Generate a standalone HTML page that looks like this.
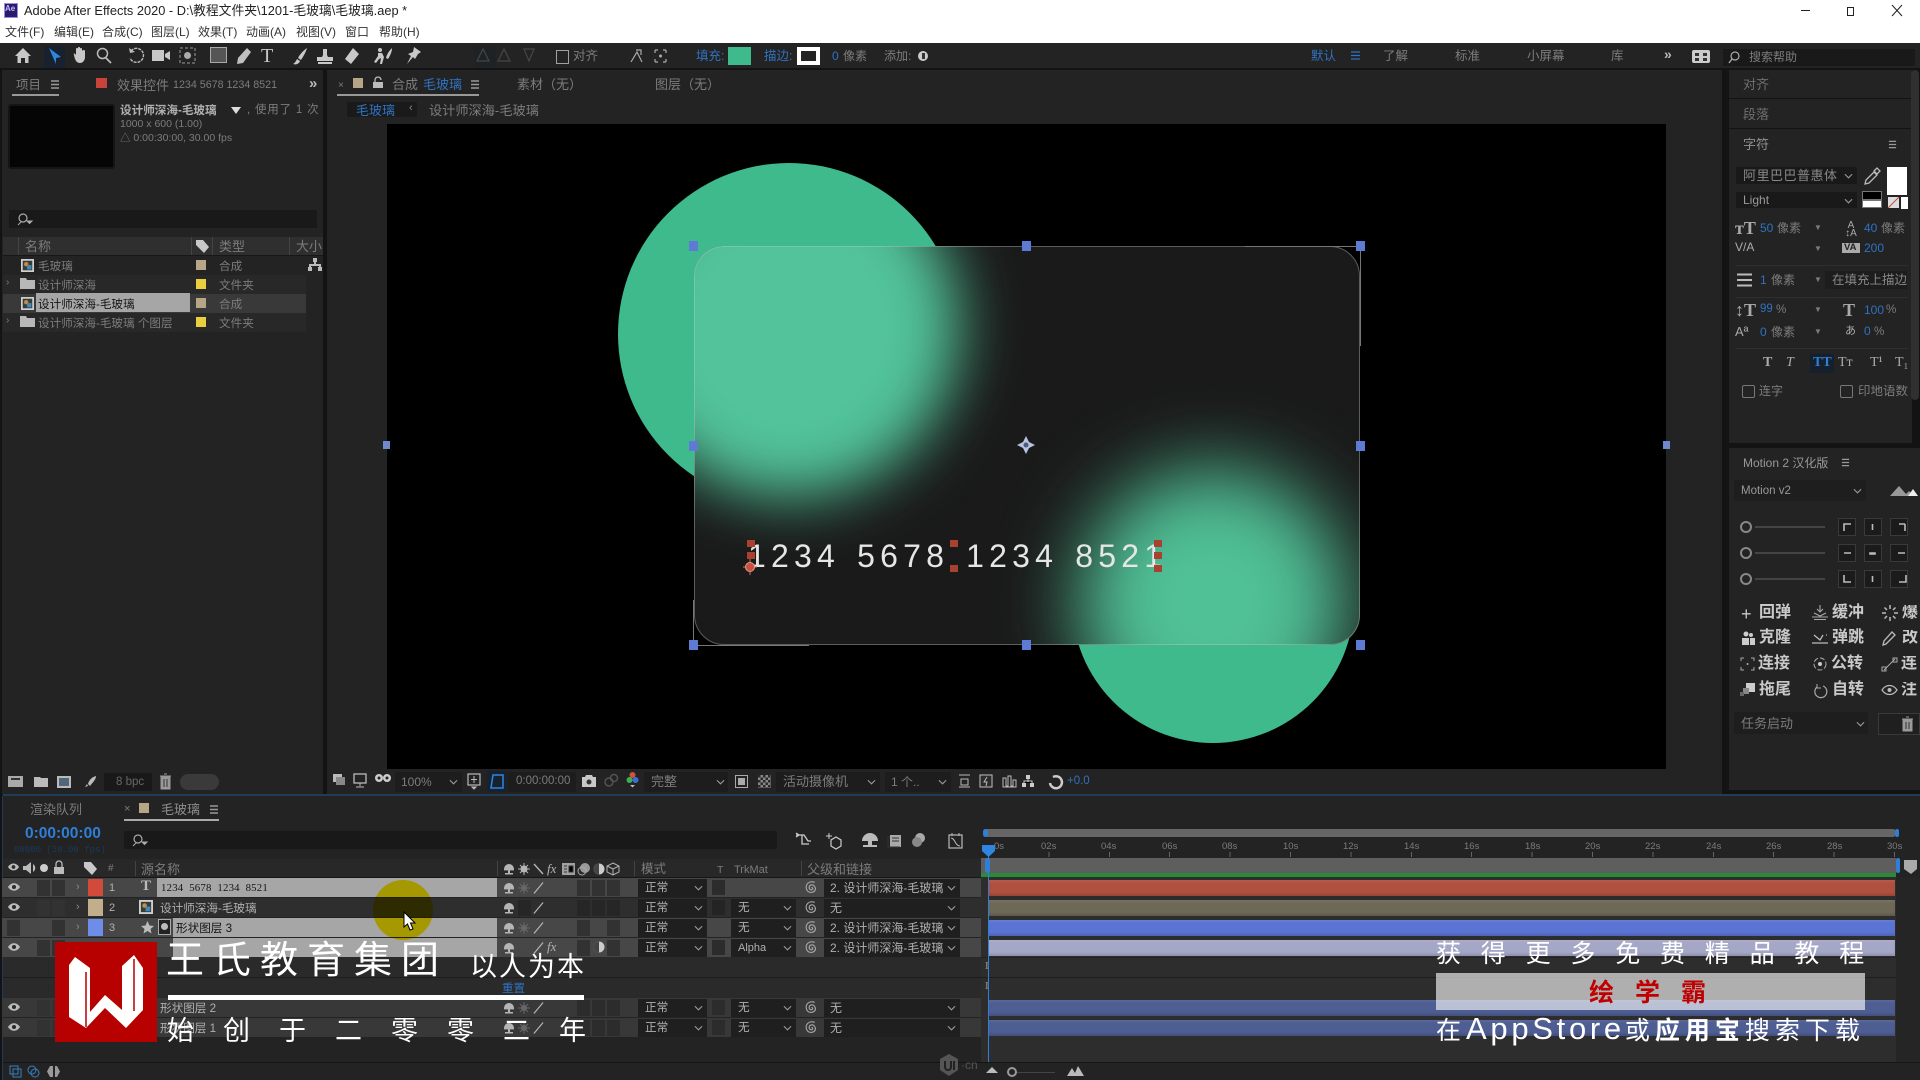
<!DOCTYPE html>
<html><head><meta charset="utf-8"><style>
html,body{margin:0;padding:0;width:1920px;height:1080px;overflow:hidden;background:#131313}
#p{position:absolute;left:0;top:0;width:1920px;height:1080px;overflow:hidden;font-family:"Liberation Sans","Noto Sans CJK SC",sans-serif;filter:blur(.35px);background:#131313}
div,span,svg{position:absolute}
span{white-space:nowrap;line-height:1}
.d{color:#7c7c7c;font-size:13px}
.s{color:#7c7c7c;font-size:11.6px}
.l{color:#b0b0b0;font-size:11.6px}
.b{color:#2f72c0;font-size:12px}
.p{background:#232323}
.x{background:#191919}
.h{width:9px;height:10px;background:#5d7bd5}
.q{width:8px;height:7px;background:#a8412f}
.w{color:#c9c9c9;font-size:16px;font-weight:bold}
.ln{height:1px;background:#181818}
svg{overflow:visible}
.r{left:2px;width:979px;height:19px}
.r>*{margin-left:-2px}
.sb{width:13px;height:16px;top:2px;background:#323232}
.mb{left:638px;top:1px;width:69px;height:18px;background:#1f1f1f}
.tb{left:712px;top:2px;width:13px;height:15px;background:#2c2c2c}
.kb{left:731px;top:1px;width:65px;height:18px;background:#1f1f1f}
.ab{left:824px;top:1px;width:136px;height:18px;background:#1f1f1f}
.bar{left:988px;width:907px;height:16px;box-shadow:inset 0 2px 2px rgba(255,255,255,.07),inset 0 -2px 2px rgba(0,0,0,.14)}
.g{width:18px;height:18px;background:#1b1b1b;border:1px solid #3a3a3a;box-sizing:border-box}
</style></head><body><div id="p">
<svg width="0" height="0" style="left:0;top:0"><defs>
<symbol id="c" viewBox="0 0 10 6"><path d="M1 1l4 4 4-4" fill="none" stroke="#999" stroke-width="1.2"/></symbol>
<symbol id="m" viewBox="0 0 10 9"><path d="M1 1h8M1 4.5h8M1 8h8" stroke="#999" stroke-width="1.4"/></symbol>
<symbol id="e" viewBox="0 0 12 8"><path d="M0 4c3-5 9-5 12 0-3 5-9 5-12 0z" fill="#bbb"/><circle cx="6" cy="4" r="2" fill="#2a2a2a"/></symbol>
<symbol id="n" viewBox="0 0 12 12"><path d="M1 6a5 5 0 0 1 10 0zM5 6h2v4H5zM2 10h8v1.5H2zM1 6h10v1.4H1z" fill="#b5b5b5"/></symbol>
<symbol id="sl" viewBox="0 0 12 12"><path d="M1 12L11 0" stroke="#b5b5b5" stroke-width="1.3"/></symbol>
<symbol id="sp" viewBox="0 0 14 14"><path d="M7 7.5c1-1 2 .5 1 1.5s-3.5.5-3.5-2S7 3.5 9 4.5s3 4 1.5 6-5.500 2.500-7.500.5S.5 5.500 2.500 3 8 .5 10.500 1.500" fill="none" stroke="#a8a8a8" stroke-width="1.2"/></symbol>
<symbol id="cp" viewBox="0 0 15 15"><rect width="15" height="15" fill="#cfcfcf"/><rect x="2" y="2" width="11" height="11" fill="#33403a"/><circle cx="6" cy="6" r="2.500" fill="#c84"/><rect x="7" y="7" width="5" height="5" fill="#48b"/></symbol>
<symbol id="f" viewBox="0 0 15 12"><path d="M0 1h6l1 2h8v9H0z" fill="#b8b8b8"/></symbol>
</defs></svg>

<!-- title -->
<div style="left:0;top:0;width:1920px;height:43px;background:#fff"></div>
<div style="left:4px;top:3px;width:14px;height:15px;background:#2a1a6a;border:1px solid #9a8ae0;box-sizing:border-box"></div>
<span style="left:5px;top:5px;color:#c9b8ff;font-size:8px;font-weight:bold">Ae</span>
<span style="left:24px;top:5px;color:#222;font-size:12.800px">Adobe After Effects 2020 - D:\教程文件夹\1201-毛玻璃\毛玻璃.aep *</span>
<span style="left:5px;top:26px;color:#333;font-size:12px">文件(F)</span>
<span style="left:54px;top:26px;color:#333;font-size:12px">编辑(E)</span>
<span style="left:102px;top:26px;color:#333;font-size:12px">合成(C)</span>
<span style="left:151px;top:26px;color:#333;font-size:12px">图层(L)</span>
<span style="left:198px;top:26px;color:#333;font-size:12px">效果(T)</span>
<span style="left:246px;top:26px;color:#333;font-size:12px">动画(A)</span>
<span style="left:296px;top:26px;color:#333;font-size:12px">视图(V)</span>
<span style="left:345px;top:26px;color:#333;font-size:12px">窗口</span>
<span style="left:379px;top:26px;color:#333;font-size:12px">帮助(H)</span>
<div style="left:1801px;top:10px;width:9px;height:1px;background:#222"></div>
<div style="left:1847px;top:7px;width:7px;height:9px;border:1px solid #222;box-sizing:border-box"></div>
<svg style="left:1892px;top:5px" width="10" height="11"><path d="M0 0l10 11M10 0L0 11" stroke="#222"/></svg>

<!-- toolbar -->
<div class="p" style="left:0;top:43px;width:1920px;height:25px"></div>
<svg style="left:14px;top:47px" width="18" height="17"><path d="M9 1L1 9h2.500v7H7v-5h4v5h3.500V9H17z" fill="#c8c8c8"/></svg>
<div style="left:44px;top:46px;width:21px;height:22px;background:#17222e"></div>
<svg style="left:49px;top:48px" width="12" height="16"><path d="M0 0l12 9-5 1 0 6z" fill="#2f86e0"/></svg>
<svg style="left:72px;top:47px" width="15" height="17"><path d="M2 8c-1-2 1-2 2 0V2c0-1.500 2-1.500 2 0V1c0-1.500 2-1.500 2 0v1c0-1.500 2-1.500 2 0v2c1-1.500 3-1 3 0v6c0 3-2 6-5 6S3 14 2 8z" fill="#c8c8c8"/></svg>
<svg style="left:96px;top:47px" width="16" height="17"><circle cx="6.500" cy="6.500" r="5" fill="none" stroke="#bbb" stroke-width="1.500"/><path d="M10 11l5 5" stroke="#bbb" stroke-width="1.800"/></svg>
<svg style="left:128px;top:47px" width="17" height="17"><path d="M3 4a7 7 0 1 1-1 7" fill="none" stroke="#bbb" stroke-width="1.400" stroke-dasharray="3 1"/><path d="M1 1l1 5 5-1z" fill="#bbb"/></svg>
<svg style="left:152px;top:49px" width="19" height="13"><rect y="1" width="12" height="11" fill="#c8c8c8"/><path d="M13 5l5-3v9l-5-3z" fill="#c8c8c8"/></svg>
<svg style="left:179px;top:47px" width="17" height="17"><rect x="1" y="1" width="15" height="15" fill="none" stroke="#999" stroke-dasharray="3 2"/><circle cx="8.500" cy="8.500" r="3.500" fill="#aaa"/></svg>
<div style="left:210px;top:47px;width:17px;height:16px;border:1.500px solid #aaa;background:#555;box-sizing:border-box"></div>
<svg style="left:235px;top:47px" width="17" height="18"><path d="M12 1l4 4-8 11-6 1 1-6z" fill="#c0c0c0"/></svg>
<span style="left:261px;top:46px;color:#c8c8c8;font-size:20px;font-family:'Liberation Serif',serif">T</span>
<svg style="left:292px;top:47px" width="16" height="18"><path d="M15 1c-3 2-7 6-9 10l3 2c2-3 5-8 6-12zM5 12l3 2c-1 3-4 4-7 3 2-1 3-3 4-5z" fill="#c8c8c8"/></svg>
<svg style="left:316px;top:47px" width="18" height="18"><path d="M7 2h4v6l1 2h5v4H1v-4h5l1-2zM2 15h14v2H2z" fill="#c8c8c8"/></svg>
<svg style="left:342px;top:47px" width="18" height="18"><path d="M11 1l6 6-8 10-6-5z" fill="#c8c8c8"/></svg>
<svg style="left:373px;top:47px" width="21" height="18"><circle cx="7" cy="3" r="2" fill="#c8c8c8"/><path d="M5 6h4l2 4-2 7H7l1-6-2 1-3 4-2-1 4-6zM19 1c-3 3-5 6-6 10l2 1c2-3 4-7 4-11z" fill="#c8c8c8"/></svg>
<svg style="left:404px;top:46px" width="19" height="19"><path d="M10 1l7 5-3 2-3 5-2-2-6 7 4-8-3-2 5-2z" fill="#c8c8c8"/></svg>
<div style="left:474px;top:46px;width:22px;height:21px;background:#1f2225"></div>
<svg style="left:474px;top:48px" width="65" height="14" opacity=".3"><path d="M9 1L3 13h12zM30 1l-6 12h12zM50 1h10l-5 12z" fill="none" stroke="#999" stroke-width="1.200"/></svg>
<div style="left:556px;top:50px;width:13px;height:14px;border:1.500px solid #a0a0a0;box-sizing:border-box"></div>
<span class="d" style="left:573px;top:50px;font-size:12.500px">对齐</span>
<svg style="left:630px;top:49px" width="40" height="14"><path d="M1 13L7 3l5 10M6 1h5v5" fill="none" stroke="#aaa" stroke-width="1.200"/><path d="M25 1h3M33 1h3M25 13h3M33 13h3M25 1v3M36 1v3M25 10v3M36 10v3" stroke="#aaa" stroke-width="1.200"/><circle cx="30.500" cy="7" r="1.500" fill="#aaa"/></svg>
<span class="b" style="left:696px;top:50px;font-size:12.500px">填充:</span>
<div style="left:728px;top:47px;width:23px;height:18px;background:#3fba8d"></div>
<span class="b" style="left:764px;top:50px;font-size:12.500px">描边:</span>
<div style="left:797px;top:47px;width:23px;height:18px;background:#fff"></div>
<div style="left:801px;top:51px;width:15px;height:10px;background:#232323"></div>
<span class="b" style="left:832px;top:50px">0</span>
<span class="d" style="left:843px;top:50px;font-size:12px">像素</span>
<span class="d" style="left:884px;top:50px;font-size:12px">添加:</span>
<div style="left:918px;top:51px;width:10px;height:10px;border-radius:50%;background:#ccc"></div>
<div style="left:922px;top:53px;width:3px;height:6px;background:#333"></div>
<span class="b" style="left:1311px;top:50px;font-size:12.500px">默认</span>
<svg style="left:1351px;top:51px" width="9" height="9"><path d="M0 1h9M0 4.500h9M0 8h9" stroke="#2f72c0" stroke-width="1.300"/></svg>
<span class="d" style="left:1383px;top:50px;font-size:12.500px">了解</span>
<span class="d" style="left:1455px;top:50px;font-size:12.500px">标准</span>
<span class="d" style="left:1527px;top:50px;font-size:12.500px">小屏幕</span>
<span class="d" style="left:1611px;top:50px;font-size:12.500px">库</span>
<span style="left:1664px;top:47px;color:#bbb;font-size:14px;font-weight:bold">»</span>
<div style="left:1692px;top:50px;width:18px;height:13px;background:#ccc;border-radius:2px"></div>
<div style="left:1695px;top:53px;width:4px;height:3px;background:#333"></div>
<div style="left:1703px;top:53px;width:4px;height:3px;background:#333"></div>
<div style="left:1695px;top:58px;width:4px;height:3px;background:#333"></div>
<div style="left:1703px;top:58px;width:4px;height:3px;background:#333"></div>
<div class="x" style="left:1723px;top:49px;width:192px;height:17px"></div>
<svg style="left:1728px;top:51px" width="12" height="13"><circle cx="7" cy="5" r="4" fill="none" stroke="#aaa" stroke-width="1.200"/><path d="M4 8L1 12" stroke="#aaa" stroke-width="1.400"/></svg>
<span class="d" style="left:1749px;top:51px;font-size:12px">搜索帮助</span>

<!-- left panel -->
<div class="p" style="left:2px;top:70px;width:321px;height:725px"></div>
<span class="d" style="left:16px;top:79px;font-size:12.500px">项目</span>
<svg style="left:50px;top:80px" width="10" height="9"><use href="#m"/></svg>
<div style="left:12px;top:94px;width:47px;height:2px;background:#999"></div>
<div style="left:96px;top:78px;width:11px;height:10px;background:#c8443a"></div>
<span class="d" style="left:117px;top:79px;font-size:13px">效果控件</span>
<span class="d" style="left:173px;top:80px;font-size:10.700px">1234 5678 1234 8521</span>
<span style="left:309px;top:76px;color:#bbb;font-size:15px;font-weight:bold">»</span>
<div style="left:8px;top:104px;width:107px;height:65px;background:#050505;border:2px solid #151515;box-sizing:border-box;border-radius:3px"></div>
<span class="l" style="left:120px;top:105px;font-weight:bold;font-size:11.600px">设计师深海-毛玻璃</span>
<svg style="left:231px;top:107px" width="10" height="7"><path d="M0 0h10L5 7z" fill="#ddd"/></svg>
<span class="s" style="left:247px;top:105px;font-size:11.500px;letter-spacing:.8px">, 使用了 1 次</span>
<span class="s" style="left:120px;top:119px;font-size:10.500px">1000 x 600 (1.00)</span>
<span class="s" style="left:120px;top:133px;font-size:10.500px">△ 0:00:30:00, 30.00 fps</span>
<div class="x" style="left:9px;top:210px;width:308px;height:18px"></div>
<svg style="left:16px;top:213px" width="17" height="13"><circle cx="7" cy="5" r="4" fill="none" stroke="#aaa" stroke-width="1.200"/><path d="M5 9l-3 3M11 8h5l-2.500 2.500z" stroke="#aaa" fill="#aaa"/></svg>
<div style="left:3px;top:237px;width:320px;height:18px;background:#2f2f2f;border-bottom:1px solid #171717"></div>
<span class="d" style="left:25px;top:240px">名称</span>
<svg style="left:196px;top:240px" width="13" height="13"><path d="M0 0h7l6 7-5 6-8-8z" fill="#c8c8c8"/></svg>
<span class="d" style="left:219px;top:240px">类型</span>
<span class="d" style="left:296px;top:240px">大小</span>
<div style="left:18px;top:237px;width:1px;height:18px;background:#444"></div>
<div style="left:191px;top:237px;width:1px;height:18px;background:#444"></div>
<div style="left:212px;top:237px;width:1px;height:18px;background:#444"></div>
<div style="left:289px;top:237px;width:1px;height:18px;background:#444"></div>
<div style="left:3px;top:275px;width:303px;height:19px;background:#282828"></div>
<div style="left:3px;top:294px;width:303px;height:19px;background:#393939"></div>
<div style="left:3px;top:313px;width:303px;height:19px;background:#282828"></div>
<svg style="left:20px;top:259px" width="15" height="13"><use href="#cp"/></svg>
<svg style="left:20px;top:277px" width="15" height="12"><use href="#f"/></svg>
<svg style="left:20px;top:297px" width="15" height="13"><use href="#cp"/></svg>
<svg style="left:20px;top:315px" width="15" height="12"><use href="#f"/></svg>
<div style="left:36px;top:293px;width:154px;height:19px;background:#a6a6a6"></div>
<span class="s" style="left:38px;top:261px">毛玻璃</span>
<span class="s" style="left:38px;top:280px">设计师深海</span>
<span style="left:38px;top:299px;font-size:11.600px;color:#151515">设计师深海-毛玻璃</span>
<span class="s" style="left:38px;top:318px">设计师深海-毛玻璃 个图层</span>
<span class="s" style="left:6px;top:278px;font-size:10px">›</span>
<span class="s" style="left:6px;top:316px;font-size:10px">›</span>
<div style="left:196px;top:260px;width:10px;height:10px;background:#b7a588"></div>
<div style="left:196px;top:279px;width:10px;height:10px;background:#e9cf3f"></div>
<div style="left:196px;top:298px;width:10px;height:10px;background:#b7a588"></div>
<div style="left:196px;top:317px;width:10px;height:10px;background:#e9cf3f"></div>
<span class="s" style="left:219px;top:261px">合成</span>
<span class="s" style="left:219px;top:280px">文件夹</span>
<span class="s" style="left:219px;top:299px">合成</span>
<span class="s" style="left:219px;top:318px">文件夹</span>
<svg style="left:308px;top:258px" width="14" height="13"><path d="M5 0h4v4H8v2h5v3h1v4h-4V9h1V8H3v1h1v4H0V9h1V6h5V4H5z" fill="#bbb"/></svg>
<svg style="left:8px;top:775px" width="90" height="14"><rect y="1" width="15" height="11" fill="#aaa"/><rect x="3" y="3" width="9" height="2" fill="#333"/><path d="M26 2h6l1 1h7v9H26z" fill="#bbb"/><rect x="49" y="1" width="14" height="12" fill="#bbb"/><rect x="51" y="3" width="10" height="8" fill="#567"/><path d="M88 1c-4 1-7 4-8 8l2 2c2-3 6-6 6-10zM79 9l-2 3 3-1z" fill="#bbb"/></svg>
<div class="x" style="left:104px;top:773px;width:48px;height:18px"></div>
<span class="s" style="left:116px;top:777px;font-size:11.500px;color:#666">8 bpc</span>
<svg style="left:160px;top:774px" width="11" height="15"><path d="M1 3h9v12H1zM0 2h11M4 0h3" fill="#999" stroke="#999"/><path d="M4 5v8M7 5v8" stroke="#333"/></svg>
<div style="left:180px;top:774px;width:39px;height:16px;border-radius:8px;background:#3a3a3a"></div>

<!-- viewer panel -->
<div class="p" style="left:327px;top:70px;width:1395px;height:725px"></div>
<span class="s" style="left:338px;top:81px;font-size:10px">×</span>
<div style="left:353px;top:78px;width:10px;height:10px;background:#b7a588"></div>
<svg style="left:373px;top:77px" width="10" height="11"><path d="M2 5V3a3 3 0 0 1 6 0" fill="none" stroke="#bbb" stroke-width="1.300"/><rect y="5" width="10" height="6" fill="#bbb"/></svg>
<span class="d" style="left:392px;top:78px">合成</span>
<span class="d" style="left:423px;top:78px;color:#2f72c0">毛玻璃</span>
<svg style="left:470px;top:80px" width="10" height="9"><use href="#m"/></svg>
<div style="left:337px;top:94px;width:142px;height:2px;background:#999"></div>
<span class="d" style="left:517px;top:78px">素材（无）</span>
<span class="d" style="left:655px;top:78px">图层（无）</span>
<div style="left:347px;top:102px;width:70px;height:15px;background:#1a1a1a;border-radius:2px"></div>
<span class="d" style="left:356px;top:104px;color:#2f72c0">毛玻璃</span>
<span class="d" style="left:409px;top:103px;font-size:11px;color:#888">‹</span>
<span class="d" style="left:429px;top:104px;font-size:13.200px">设计师深海-毛玻璃</span>

<!-- comp -->
<div style="left:387px;top:124px;width:1279px;height:645px;background:#000"></div>
<div style="left:618px;top:163px;width:342px;height:342px;border-radius:50%;background:#3fba8d"></div>
<div style="left:1072px;top:461px;width:282px;height:282px;border-radius:50%;background:#3fba8d"></div>
<div style="left:694px;top:246px;width:666px;height:399px;border-radius:30px;overflow:hidden;background:#1a1a1a">
<div style="left:-76px;top:-90px;width:342px;height:342px;border-radius:50%;background:#52c39a;filter:blur(30px)"></div>
<div style="left:384px;top:222px;width:270px;height:270px;border-radius:50%;background:#50c096;filter:blur(38px)"></div>
</div>
<div style="left:694px;top:246px;width:666px;height:399px;border-radius:30px;border:1.500px solid rgba(200,200,200,.38);box-sizing:border-box"></div>
<div style="left:1245px;top:246px;width:115px;height:1px;background:#777"></div>
<div style="left:1360px;top:246px;width:1px;height:100px;background:#777"></div>
<div style="left:694px;top:645px;width:115px;height:1px;background:#777"></div>
<div style="left:693px;top:600px;width:1px;height:45px;background:#777"></div>
<div class="h" style="left:689px;top:241px"></div>
<div class="h" style="left:1022px;top:241px"></div>
<div class="h" style="left:1356px;top:241px"></div>
<div class="h" style="left:689px;top:441px"></div>
<div class="h" style="left:1356px;top:441px"></div>
<div class="h" style="left:689px;top:640px"></div>
<div class="h" style="left:1022px;top:640px"></div>
<div class="h" style="left:1356px;top:640px"></div>
<div class="h" style="left:383px;top:441px;background:#6f88cf;width:7px;height:8px"></div>
<div class="h" style="left:1663px;top:441px;background:#6f88cf;width:7px;height:8px"></div>
<svg style="left:1017px;top:436px" width="18" height="18"><path d="M9 0l3 6 6 3-6 3-3 6-3-6-6-3 6-3z" fill="#b9c3e0"/><circle cx="9" cy="9" r="2.500" fill="#4a5a80"/></svg>
<span style="left:748px;top:540px;color:#e6e6e6;font-size:32px;letter-spacing:5.200px;word-spacing:3px">1234 5678 1234 8521</span>
<div class="q" style="left:747px;top:540px"></div>
<div class="q" style="left:747px;top:552px"></div>
<div class="q" style="left:950px;top:540px"></div>
<div class="q" style="left:950px;top:565px"></div>
<div class="q" style="left:1154px;top:540px"></div>
<div class="q" style="left:1154px;top:552px"></div>
<div class="q" style="left:1154px;top:565px"></div>
<svg style="left:743px;top:559px" width="14" height="16"><path d="M7 0v16M0 8h14" stroke="#d86a5a"/><circle cx="7" cy="8" r="4.500" fill="#c9503f" stroke="#e89a8a"/></svg>

<!-- viewer bar -->
<div class="p" style="left:327px;top:769px;width:1395px;height:25px"></div>
<svg style="left:333px;top:773px" width="60" height="16"><rect width="9" height="8" y="1" fill="#bbb"/><rect x="3" y="4" width="9" height="8" fill="#888"/><rect x="21" y="1" width="12" height="9" fill="none" stroke="#bbb" stroke-width="1.300"/><path d="M27 10v3M23 14h8" stroke="#bbb"/><circle cx="46" cy="5" r="4" fill="#ccc"/><circle cx="54" cy="5" r="4" fill="#ccc"/><circle cx="46" cy="5" r="1.500" fill="#222"/><circle cx="54" cy="5" r="1.500" fill="#222"/></svg>
<div class="x" style="left:395px;top:772px;width:67px;height:20px;background:#1d1d1d"></div>
<span class="s" style="left:401px;top:776px;font-size:12px">100%</span>
<svg style="left:449px;top:779px" width="9" height="6"><use href="#c"/></svg>
<svg style="left:467px;top:773px" width="14" height="16"><rect x="1" y="1" width="12" height="11" fill="none" stroke="#bbb" stroke-width="1.200"/><path d="M7 3v7M4 6.500h6M5 14h4l-2 2z" stroke="#bbb" fill="#bbb"/></svg>
<div style="left:487px;top:771px;width:20px;height:21px;background:#17222e"></div>
<svg style="left:490px;top:774px" width="14" height="15"><path d="M3 1h10v13H1z" fill="none" stroke="#2f86e0" stroke-width="1.500"/></svg>
<div class="x" style="left:508px;top:772px;width:68px;height:20px;background:#1d1d1d"></div>
<span class="s" style="left:516px;top:776px;font-size:11.500px">0:00:00:00</span>
<svg style="left:582px;top:774px" width="14" height="13"><path d="M0 3h3l1-2h6l1 2h3v10H0z" fill="#c8c8c8"/><circle cx="7" cy="8" r="2.500" fill="#333"/></svg>
<svg style="left:604px;top:773px" width="14" height="14" opacity=".35"><circle cx="5" cy="9" r="4" fill="none" stroke="#aaa" stroke-width="1.500"/><circle cx="10" cy="5" r="3.500" fill="none" stroke="#aaa" stroke-width="1.500"/></svg>
<svg style="left:626px;top:771px" width="13" height="17"><circle cx="6.500" cy="4" r="3" fill="#d5503a"/><circle cx="3.500" cy="9" r="3" fill="#39b14f"/><circle cx="9.500" cy="9" r="3" fill="#3a6fd8"/><path d="M4 14h5l-2.500 2.500z" fill="#bbb"/></svg>
<div class="x" style="left:644px;top:772px;width:84px;height:20px;background:#1d1d1d"></div>
<span class="d" style="left:651px;top:775px">完整</span>
<svg style="left:716px;top:779px" width="9" height="6"><use href="#c"/></svg>
<div style="left:735px;top:775px;width:13px;height:13px;border:1.500px solid #aaa;box-sizing:border-box"></div><div style="left:738px;top:778px;width:7px;height:7px;background:#aaa"></div>
<div style="left:758px;top:775px;width:13px;height:13px;background:repeating-conic-gradient(#888 0 25%,#2a2a2a 0 50%) 0 0/5px 5px"></div>
<div class="x" style="left:776px;top:772px;width:104px;height:20px;background:#1d1d1d"></div>
<span class="d" style="left:783px;top:775px">活动摄像机</span>
<svg style="left:867px;top:779px" width="9" height="6"><use href="#c"/></svg>
<div class="x" style="left:885px;top:772px;width:66px;height:20px;background:#1d1d1d"></div>
<span class="s" style="left:891px;top:776px;font-size:12px">1 个..</span>
<svg style="left:938px;top:779px" width="9" height="6"><use href="#c"/></svg>
<svg style="left:958px;top:774px" width="105" height="15"><path d="M1 1h11M1 13h11" stroke="#bbb"/><rect x="3" y="5" width="7" height="6" fill="none" stroke="#bbb"/><rect x="21" y="0" width="14" height="14" fill="#2c2c2c"/><rect x="22" y="1" width="12" height="12" fill="none" stroke="#bbb"/><path d="M29 3l-3 5h3l-1 4" stroke="#bbb" fill="none"/><path d="M45 12V4h3v8h2V2h3v10h2V6h3v7H45z" fill="none" stroke="#bbb"/><rect x="68" y="1" width="4" height="4" fill="#ccc"/><rect x="64" y="9" width="4" height="4" fill="#ccc"/><rect x="72" y="9" width="4" height="4" fill="#ccc"/><path d="M70 5v3M66 9V7h8v2" stroke="#ccc"/><path d="M95 3a6 6 0 1 1-3 6" fill="none" stroke="#ccc" stroke-width="2.500"/></svg>
<span class="b" style="left:1067px;top:776px;font-size:11.500px">+0.0</span>
<div style="left:3px;top:794px;width:1917px;height:1.500px;background:#1f3d58"></div>

<!-- right panels -->
<div class="p" style="left:1729px;top:70px;width:183px;height:28px"></div>
<div class="p" style="left:1729px;top:99px;width:183px;height:29px"></div>
<div class="p" style="left:1729px;top:129px;width:183px;height:314px"></div>
<div style="left:1911px;top:70px;width:8px;height:330px;border-radius:4px;background:#303030"></div>
<div style="left:1727px;top:70px;width:1px;height:720px;background:#161616"></div>
<span class="d" style="left:1743px;top:78px;color:#6f6f6f">对齐</span>
<span class="d" style="left:1743px;top:108px;color:#6f6f6f">段落</span>
<span class="d" style="left:1743px;top:138px;color:#909090">字符</span>
<svg style="left:1888px;top:140px" width="9" height="9"><use href="#m"/></svg>
<div class="x" style="left:1736px;top:167px;width:121px;height:17px"></div>
<span class="d" style="left:1743px;top:169px;letter-spacing:.5px;color:#888">阿里巴巴普惠体</span>
<svg style="left:1844px;top:173px" width="9" height="6"><use href="#c"/></svg>
<svg style="left:1863px;top:168px" width="18" height="18"><path d="M2 16l1-4 8-8 3 3-8 8zM11 3l3-3 3 3-3 3z" fill="none" stroke="#bbb" stroke-width="1.300"/></svg>
<div style="left:1887px;top:167px;width:20px;height:28px;background:#fff"></div>
<div class="x" style="left:1736px;top:192px;width:121px;height:16px"></div>
<span class="d" style="left:1743px;top:194px;font-size:12px;color:#999">Light</span>
<svg style="left:1844px;top:198px" width="9" height="6"><use href="#c"/></svg>
<div style="left:1862px;top:191px;width:20px;height:9px;background:#000;border:1px solid #777;box-sizing:border-box"></div>
<div style="left:1862px;top:200px;width:20px;height:8px;background:#fff;border:1px solid #777;box-sizing:border-box"></div>
<svg style="left:1888px;top:197px" width="11" height="11"><rect width="11" height="11" fill="#ddd"/><path d="M0 11L11 0" stroke="#c05040"/></svg>
<div style="left:1901px;top:197px;width:7px;height:12px;background:#fff"></div>
<div style="left:1736px;top:265px;width:172px;height:1px;background:#2f2f2f"></div>
<div style="left:1736px;top:297px;width:172px;height:1px;background:#2f2f2f"></div>
<div style="left:1736px;top:348px;width:172px;height:1px;background:#2f2f2f"></div>
<span style="left:1735px;top:219px;color:#aaa;font-size:18px;font-weight:bold;font-family:'Liberation Serif',serif">тT</span>
<span class="b" style="left:1760px;top:222px">50</span><span class="d" style="left:1777px;top:222px;font-size:12px">像素</span>
<span class="s" style="left:1814px;top:224px;font-size:8px">▼</span>
<span style="left:1841px;top:222px;color:#aaa;font-size:10px;line-height:8px;white-space:normal;width:20px;text-align:center">A<br>↕A</span>
<span class="b" style="left:1864px;top:222px">40</span><span class="d" style="left:1881px;top:222px;font-size:12px">像素</span>
<span class="d" style="left:1735px;top:241px;font-size:12px;color:#aaa">V/A</span>
<span class="s" style="left:1814px;top:245px;font-size:8px">▼</span>
<div style="left:1842px;top:243px;width:18px;height:10px;background:#aaa"></div>
<span style="left:1844px;top:243px;color:#222;font-size:9.500px;font-weight:bold">VA</span>
<span class="b" style="left:1864px;top:242px">200</span>
<svg style="left:1737px;top:273px" width="15" height="14"><path d="M0 1.500h15M0 7h15M0 12.500h15" stroke="#bbb" stroke-width="2"/></svg>
<span class="b" style="left:1760px;top:274px">1</span><span class="d" style="left:1771px;top:274px;font-size:12px">像素</span>
<span class="s" style="left:1814px;top:276px;font-size:8px">▼</span>
<div class="x" style="left:1825px;top:271px;width:82px;height:18px;overflow:hidden;background:#1d1d1d"><span class="d" style="left:7px;top:3px;font-size:12.500px;color:#888">在填充上描边</span></div>
<span style="left:1735px;top:301px;color:#aaa;font-size:18px;font-weight:bold;font-family:'Liberation Serif',serif">↕T</span>
<span class="b" style="left:1760px;top:304px;font-size:11.500px">99</span><span class="s" style="left:1776px;top:304px">%</span>
<span class="s" style="left:1814px;top:306px;font-size:8px">▼</span>
<span style="left:1843px;top:301px;color:#aaa;font-size:18px;font-weight:bold;font-family:'Liberation Serif',serif">T</span>
<span class="b" style="left:1864px;top:304px">100</span><span class="s" style="left:1886px;top:304px">%</span>
<span style="left:1735px;top:325px;color:#aaa;font-size:13px;font-family:'Liberation Sans'">Aª</span>
<span class="b" style="left:1760px;top:326px">0</span><span class="d" style="left:1771px;top:326px;font-size:12px">像素</span>
<span class="s" style="left:1814px;top:328px;font-size:8px">▼</span>
<span class="s" style="left:1845px;top:326px;font-size:11px;color:#aaa">あ</span>
<span class="b" style="left:1864px;top:325px">0</span><span class="s" style="left:1874px;top:326px">%</span>
<span style="left:1763px;top:356px;color:#aaa;font-size:14px;font-weight:bold;font-family:'Liberation Serif',serif">T</span>
<span style="left:1786px;top:356px;color:#aaa;font-size:14px;font-style:italic;font-family:'Liberation Serif',serif">T</span>
<div style="left:1810px;top:354px;width:24px;height:19px;background:#15202c"></div>
<span style="left:1813px;top:356px;color:#2f7fd8;font-size:14px;font-weight:bold;font-family:'Liberation Serif',serif">TT</span>
<span style="left:1838px;top:356px;color:#aaa;font-size:14px;font-family:'Liberation Serif',serif">Tт</span>
<span style="left:1870px;top:356px;color:#aaa;font-size:14px;font-family:'Liberation Serif',serif">T¹</span>
<span style="left:1895px;top:356px;color:#aaa;font-size:14px;font-family:'Liberation Serif',serif">T₁</span>
<div style="left:1742px;top:385px;width:13px;height:13px;border:1.500px solid #777;border-radius:2px;box-sizing:border-box"></div>
<span class="s" style="left:1759px;top:385px;font-size:12px">连字</span>
<div style="left:1840px;top:385px;width:13px;height:13px;border:1.500px solid #777;border-radius:2px;box-sizing:border-box"></div>
<div style="left:1858px;top:385px;width:50px;height:14px;overflow:hidden"><span class="s" style="left:0;top:0;font-size:12.500px">印地语数</span></div>

<div class="p" style="left:1729px;top:448px;width:191px;height:342px"></div>
<span class="l" style="left:1743px;top:457px;font-size:12px;color:#999">Motion 2 汉化版</span>
<svg style="left:1841px;top:458px" width="9" height="9"><use href="#m"/></svg>
<div class="x" style="left:1734px;top:480px;width:132px;height:21px;background:#1e1e1e"></div>
<span class="l" style="left:1741px;top:486px;font-size:11.500px;color:#999">Motion v2</span>
<svg style="left:1853px;top:488px" width="9" height="6"><use href="#c"/></svg>
<svg style="left:1890px;top:485px" width="28" height="12"><path d="M0 11L9 1l7 8 3-3 5 5z" fill="#999"/><path d="M18 11l5-7 5 7z" fill="#eee"/></svg>
<div style="left:1740px;top:521px;width:12px;height:12px;border:2px solid #888;border-radius:50%;box-sizing:border-box"></div>
<div style="left:1755px;top:526px;width:70px;height:2px;background:#444"></div>
<div style="left:1740px;top:547px;width:12px;height:12px;border:2px solid #888;border-radius:50%;box-sizing:border-box"></div>
<div style="left:1755px;top:552px;width:70px;height:2px;background:#444"></div>
<div style="left:1740px;top:573px;width:12px;height:12px;border:2px solid #888;border-radius:50%;box-sizing:border-box"></div>
<div style="left:1755px;top:578px;width:70px;height:2px;background:#444"></div>
<div class="g" style="left:1838px;top:518px"></div><div class="g" style="left:1864px;top:518px"></div><div class="g" style="left:1890px;top:518px"></div>
<div class="g" style="left:1838px;top:544px"></div><div class="g" style="left:1864px;top:544px"></div><div class="g" style="left:1890px;top:544px"></div>
<div class="g" style="left:1838px;top:570px"></div><div class="g" style="left:1864px;top:570px"></div><div class="g" style="left:1890px;top:570px"></div>
<svg style="left:1838px;top:518px" width="80" height="70"><path d="M6 13V6h7M34.500 6v6M67 6h-6M67 6v7M6 35h7M32 35h5v1h-5zM60 35h7M6 57v7h7M34.500 58v6M68 57v7h-7" fill="none" stroke="#bbb" stroke-width="1.600"/></svg>
<span class="w" style="left:1741px;top:605px;font-weight:normal;font-size:18px">+</span>
<span class="w" style="left:1759px;top:605px">回弹</span>
<svg style="left:1812px;top:605px" width="16" height="15"><path d="M8 0v6M5 4l3 3 3-3M2 8l6 3 6-3M0 12h16M2 14.500h12" fill="none" stroke="#aaa" stroke-width="1.100"/></svg>
<span class="w" style="left:1832px;top:605px">缓冲</span>
<svg style="left:1882px;top:605px" width="16" height="16"><path d="M8 0v4M8 12v4M0 8h4M12 8h4M2.500 2.500l2.500 2.500M11 11l2.500 2.500M2.500 13.500L5 11M11 5l2.500-2.500" stroke="#bbb" stroke-width="1.500"/></svg>
<div style="left:1902px;top:605px;width:17px;height:17px;overflow:hidden"><span class="w" style="left:0;top:0">爆</span></div>
<svg style="left:1741px;top:631px" width="14" height="14"><circle cx="5" cy="3" r="2.500" fill="#ccc"/><circle cx="10" cy="4" r="2" fill="#ccc"/><path d="M1 14V7h7v7zM9 14V7h5v7z" fill="#ccc"/></svg>
<span class="w" style="left:1759px;top:630px">克隆</span>
<svg style="left:1812px;top:631px" width="16" height="14"><path d="M0 12h16M2 4l6 5 3-5M14 4h1" fill="none" stroke="#bbb" stroke-width="1.300"/></svg>
<span class="w" style="left:1832px;top:630px">弹跳</span>
<svg style="left:1882px;top:631px" width="15" height="15"><path d="M1 14l1-4 8-9 3 3-9 9z" fill="none" stroke="#bbb" stroke-width="1.300"/></svg>
<div style="left:1902px;top:630px;width:17px;height:17px;overflow:hidden"><span class="w" style="left:0;top:0">改</span></div>
<svg style="left:1741px;top:658px" width="13" height="12"><path d="M0 3V0h3M10 0h3v3M0 9v3h3M13 9v3h-3" fill="none" stroke="#aaa"/><circle cx="6.500" cy="6" r="1" fill="#aaa"/></svg>
<span class="w" style="left:1758px;top:656px">连接</span>
<svg style="left:1813px;top:657px" width="14" height="14"><circle cx="7" cy="7" r="6" fill="none" stroke="#aaa" stroke-dasharray="5 2"/><circle cx="7" cy="7" r="2" fill="#ccc"/></svg>
<span class="w" style="left:1831px;top:656px">公转</span>
<svg style="left:1882px;top:657px" width="15" height="15"><path d="M2 13L13 2" stroke="#aaa"/><rect y="10" width="4" height="4" fill="none" stroke="#aaa"/><rect x="11" y="1" width="4" height="4" fill="none" stroke="#aaa"/></svg>
<div style="left:1901px;top:656px;width:18px;height:17px;overflow:hidden"><span class="w" style="left:0;top:0">连</span></div>
<svg style="left:1740px;top:683px" width="15" height="14"><rect x="6" width="9" height="9" fill="#ccc"/><rect x="3" y="5" width="6" height="6" fill="#888"/><rect y="9" width="4" height="4" fill="#666"/></svg>
<span class="w" style="left:1759px;top:682px">拖尾</span>
<svg style="left:1813px;top:683px" width="15" height="15"><path d="M10 3a6 6 0 1 1-6 1" fill="none" stroke="#aaa" stroke-width="1.200"/><path d="M4 1v4h4" fill="none" stroke="#aaa"/></svg>
<span class="w" style="left:1832px;top:682px">自转</span>
<svg style="left:1882px;top:685px" width="15" height="10"><path d="M0 5c4-6 11-6 15 0-4 6-11 6-15 0z" fill="none" stroke="#bbb" stroke-width="1.200"/><circle cx="7.500" cy="5" r="2" fill="#bbb"/></svg>
<div style="left:1901px;top:682px;width:18px;height:17px;overflow:hidden"><span class="w" style="left:0;top:0">注</span></div>
<div class="x" style="left:1734px;top:712px;width:134px;height:22px;background:#1e1e1e"></div>
<span class="d" style="left:1741px;top:717px">任务启动</span>
<svg style="left:1856px;top:721px" width="9" height="6"><use href="#c"/></svg>
<div style="left:1878px;top:713px;width:42px;height:22px;border:1px solid #3a3a3a;box-sizing:border-box;background:#1f1f1f"></div>
<svg style="left:1902px;top:717px" width="11" height="14"><path d="M1 3h9v11H1zM0 2h11M4 0h3" fill="#999" stroke="#999"/><path d="M4 5v7M7 5v7" stroke="#333"/></svg>

<!-- timeline -->
<div class="p" style="left:2px;top:796px;width:1918px;height:284px"></div>
<div style="left:2px;top:796px;width:1px;height:284px;background:#1f3d58"></div>
<span class="d" style="left:30px;top:803px">渲染队列</span>
<span class="s" style="left:124px;top:804px;font-size:11px">×</span>
<div style="left:139px;top:803px;width:10px;height:10px;background:#b7a588"></div>
<span class="d" style="left:161px;top:803px;color:#8d8d8d">毛玻璃</span>
<svg style="left:209px;top:805px" width="10" height="9"><use href="#m"/></svg>
<div style="left:124px;top:819px;width:95px;height:2px;background:#aaa"></div>
<span style="left:25px;top:826px;color:#2f7fd8;font-size:15.500px;font-weight:bold">0:00:00:00</span>
<span style="left:14px;top:846px;color:#1b3a5c;font-size:9px;font-family:'Liberation Mono',monospace">00000 (30.00 fps)</span>
<div class="x" style="left:124px;top:831px;width:653px;height:18px"></div>
<svg style="left:131px;top:834px" width="17" height="13"><circle cx="7" cy="5" r="4" fill="none" stroke="#aaa" stroke-width="1.200"/><path d="M5 9l-3 3M11 8h5l-2.500 2.500z" stroke="#aaa" fill="#aaa"/></svg>
<svg style="left:795px;top:832px" width="170" height="17"><path d="M1 3h8l4 6h3M7 3v9h7M1 1l3 2-3 2" fill="none" stroke="#ccc" stroke-width="1.300"/><path d="M34 1v6M31 4h6" stroke="#ccc"/><path d="M41 5l5 3v6l-5 3-5-3V8z" fill="none" stroke="#ccc" stroke-width="1.200"/><path d="M67 9a8 8 0 0 1 16 0zM73 9h4v4h-4zM68 13h14v2H68z" fill="#bbb"/><path d="M95 3h11v12H95z" fill="#aaa"/><path d="M95 5h-2v10h12M97 6h7M97 9h7" stroke="#333" fill="none"/><circle cx="125" cy="6" r="5" fill="#aaa"/><circle cx="122" cy="10" r="5" fill="#888"/><rect x="154" y="3" width="13" height="13" fill="none" stroke="#bbb" stroke-width="1.200"/><path d="M156 6c4 0 4 8 9 8M157 1v3M164 1v3" fill="none" stroke="#bbb"/></svg>
<div style="left:985px;top:829px;width:910px;height:8px;background:#666;border-radius:2px"></div>
<div style="left:983px;top:829px;width:5px;height:8px;border-radius:3px;background:#2f7fd8"></div>
<div style="left:1895px;top:829px;width:4px;height:8px;border-radius:3px;background:#2f7fd8"></div>
<!-- ruler -->
<span class="s" style="left:1041px;top:842px;font-size:9.500px">02s</span>
<span class="s" style="left:1101px;top:842px;font-size:9.500px">04s</span>
<span class="s" style="left:1162px;top:842px;font-size:9.500px">06s</span>
<span class="s" style="left:1222px;top:842px;font-size:9.500px">08s</span>
<span class="s" style="left:1283px;top:842px;font-size:9.500px">10s</span>
<span class="s" style="left:1343px;top:842px;font-size:9.500px">12s</span>
<span class="s" style="left:1404px;top:842px;font-size:9.500px">14s</span>
<span class="s" style="left:1464px;top:842px;font-size:9.500px">16s</span>
<span class="s" style="left:1525px;top:842px;font-size:9.500px">18s</span>
<span class="s" style="left:1585px;top:842px;font-size:9.500px">20s</span>
<span class="s" style="left:1645px;top:842px;font-size:9.500px">22s</span>
<span class="s" style="left:1706px;top:842px;font-size:9.500px">24s</span>
<span class="s" style="left:1766px;top:842px;font-size:9.500px">26s</span>
<span class="s" style="left:1827px;top:842px;font-size:9.500px">28s</span>
<span class="s" style="left:1887px;top:842px;font-size:9.500px">30s</span>
<div style="left:988px;top:852px;width:908px;height:5px;background:repeating-linear-gradient(90deg,#666 0 1px,transparent 1px 60.4px)"></div>
<span class="s" style="left:994px;top:842px;font-size:9.500px">0s</span>
<!-- header -->
<div style="left:3px;top:859px;width:978px;height:19px;background:#282828;border-bottom:1px solid #161616;box-sizing:border-box"></div>
<div style="left:981px;top:858px;width:915px;height:15px;background:#5e5e5e"></div>
<div style="left:981px;top:873px;width:915px;height:4px;background:#2a8a3a"></div>
<div style="left:985px;top:858px;width:5px;height:15px;border-radius:3px;background:#2f7fd8"></div>
<div style="left:1896px;top:858px;width:4px;height:15px;border-radius:3px;background:#2f7fd8"></div>
<svg style="left:1904px;top:860px" width="13" height="14"><path d="M0 0h13v9l-6 5-7-5z" fill="#aaa"/></svg>
<svg style="left:1904px;top:881px" width="13" height="14"><circle cx="5" cy="9" r="4" fill="none" stroke="#aaa" stroke-width="1.500"/><path d="M2 6l5-5h5v6H7z" fill="#aaa"/></svg>
<svg style="left:8px;top:863px" width="11" height="8"><use href="#e"/></svg>
<svg style="left:23px;top:862px" width="14" height="12"><path d="M0 4h3l5-4v12L3 8H0zM10 2c3 2 3 6 0 8" fill="#bbb"/></svg>
<div style="left:40px;top:864px;width:8px;height:8px;border-radius:50%;background:#ccc"></div>
<svg style="left:54px;top:861px" width="10" height="13"><path d="M2 6V3a3 3 0 0 1 6 0v3" fill="none" stroke="#bbb" stroke-width="1.300"/><rect y="6" width="10" height="7" fill="#bbb"/></svg>
<svg style="left:84px;top:862px" width="13" height="13"><path d="M0 0h7l6 7-5 6-8-8z" fill="#c8c8c8"/></svg>
<span class="s" style="left:108px;top:864px;font-size:10px">#</span>
<span class="d" style="left:141px;top:863px">源名称</span>
<div style="left:135px;top:861px;width:1px;height:15px;background:#444"></div>
<div style="left:497px;top:861px;width:1px;height:15px;background:#444"></div>
<svg style="left:503px;top:863px" width="12" height="12"><use href="#n"/></svg>
<svg style="left:518px;top:863px" width="12" height="12"><circle cx="6" cy="6" r="3.500" fill="#b5b5b5"/><path d="M6 0v12M0 6h12M2 2l8 8M10 2l-8 8" stroke="#b5b5b5"/></svg>
<svg style="left:533px;top:863px" width="11" height="12"><path d="M1 1l9 10" stroke="#b5b5b5" stroke-width="1.400"/></svg>
<span style="left:547px;top:862px;color:#b5b5b5;font-size:13px;font-style:italic;font-family:'Liberation Serif',serif">fx</span>
<svg style="left:562px;top:863px" width="58" height="13"><rect width="13" height="12" fill="#a0a0a0"/><path d="M2 3h3M2 6h3M2 9h3M7 3h4v6H7z" stroke="#333"/><circle cx="23" cy="5" r="5" fill="#999"/><circle cx="20" cy="8" r="4" fill="none" stroke="#aaa"/><circle cx="37" cy="6" r="5.500" fill="#ccc"/><path d="M37 .5a5.500 5.500 0 0 0 0 11z" fill="#444"/><path d="M51 0l6 3v6l-6 3-6-3V3z M45 3l6 3 6-3M51 6v6" fill="none" stroke="#b5b5b5"/></svg>
<span class="d" style="left:641px;top:863px;font-size:12.500px">模式</span>
<span class="s" style="left:717px;top:865px;font-size:10.500px">T</span>
<span class="s" style="left:734px;top:865px;font-size:11px">TrkMat</span>
<span class="d" style="left:807px;top:863px">父级和链接</span>
<div style="left:634px;top:861px;width:1px;height:15px;background:#444"></div>
<div style="left:801px;top:861px;width:1px;height:15px;background:#444"></div>

<div style="left:981px;top:877px;width:915px;height:185px;background:#2d2d2d"></div>
<div style="left:1896px;top:877px;width:24px;height:185px;background:#252525"></div>
<div style="left:3px;top:957px;width:978px;height:41px;background:#2a2a2a"></div>
<div style="left:3px;top:1037px;width:978px;height:25px;background:#232323"></div>

<!-- rows -->
<div class="r" style="top:878px;background:#474747">
<svg style="left:8px;top:5px" width="12" height="8"><use href="#e"/></svg><div class="sb" style="left:37px"></div><div class="sb" style="left:52px"></div>
<span class="s" style="left:76px;top:4px;font-size:11px;color:#888">›</span><div style="left:88px;top:1px;width:15px;height:17px;background:#d24a3a"></div>
<span class="l" style="left:109px;top:5px;font-size:11px">1</span>
<span style="left:141px;top:1px;color:#bbb;font-size:15px;font-weight:bold;font-family:'Liberation Serif',serif">T</span>
<div style="left:157px;top:0;width:340px;height:18.500px;background:#a6a6a6"></div>
<span style="left:161px;top:5px;font-size:10.800px;color:#151515;letter-spacing:.2px;font-family:'Liberation Serif',serif">1234&nbsp; 5678&nbsp; 1234&nbsp; 8521</span>
<svg style="left:503px;top:4px" width="12" height="12"><use href="#n"/></svg><svg style="left:518px;top:4px" width="12" height="12"><circle cx="6" cy="6" r="3" fill="#666"/><path d="M6 0v12M0 6h12M2 2l8 8M10 2l-8 8" stroke="#666"/></svg><svg style="left:533px;top:4px" width="11" height="12"><use href="#sl"/></svg>
<div class="sb" style="left:577px"></div><div class="sb" style="left:592px"></div><div class="sb" style="left:607px"></div>
<div class="mb"></div><span class="l" style="left:645px;top:4px">正常</span><svg style="left:694px;top:7px" width="9" height="6"><use href="#c"/></svg>
<div class="tb"></div><svg style="left:805px;top:3px" width="13" height="13"><use href="#sp"/></svg>
<div class="ab"></div><span class="l" style="left:830px;top:4px;font-size:12px">2. 设计师深海-毛玻璃</span><svg style="left:947px;top:7px" width="9" height="6"><use href="#c"/></svg>
</div>
<div class="r" style="top:898px;background:#2e2e2e">
<svg style="left:8px;top:5px" width="12" height="8"><use href="#e"/></svg><div class="sb" style="left:37px"></div><div class="sb" style="left:52px"></div>
<span class="s" style="left:76px;top:4px;font-size:11px;color:#888">›</span><div style="left:88px;top:1px;width:15px;height:17px;background:#c2ae8a"></div>
<span class="l" style="left:109px;top:5px;font-size:11px">2</span>
<svg style="left:138px;top:2px" width="16" height="14"><use href="#cp"/></svg>
<span class="l" style="left:160px;top:5px">设计师深海-毛玻璃</span>
<svg style="left:503px;top:4px" width="12" height="12"><use href="#n"/></svg><div class="sb" style="left:518px;background:#262626"></div><svg style="left:533px;top:4px" width="11" height="12"><use href="#sl"/></svg>
<div class="sb" style="left:577px;background:#262626"></div><div class="sb" style="left:592px;background:#262626"></div><div class="sb" style="left:607px;background:#262626"></div>
<div class="mb"></div><span class="l" style="left:645px;top:4px">正常</span><svg style="left:694px;top:7px" width="9" height="6"><use href="#c"/></svg>
<div class="tb" style="background:#242424"></div><div class="kb"></div><span class="l" style="left:738px;top:4px">无</span><svg style="left:783px;top:7px" width="9" height="6"><use href="#c"/></svg>
<svg style="left:805px;top:3px" width="13" height="13"><use href="#sp"/></svg>
<div class="ab"></div><span class="l" style="left:830px;top:4px;font-size:12px">无</span><svg style="left:947px;top:7px" width="9" height="6"><use href="#c"/></svg>
</div>
<div class="r" style="top:918px;background:#474747">
<div class="sb" style="left:7px"></div><div class="sb" style="left:52px"></div>
<span class="s" style="left:76px;top:4px;font-size:11px;color:#888">›</span><div style="left:88px;top:1px;width:15px;height:17px;background:#6e8de8"></div>
<span class="l" style="left:109px;top:5px;font-size:11px">3</span>
<svg style="left:141px;top:3px" width="13" height="13"><path d="M6.500 0l2 4.500 4.500.5-3.500 3 1 4.500-4-2.500-4 2.500 1-4.500L0 5l4.500-.5z" fill="#bbb"/></svg>
<div style="left:158px;top:1px;width:13px;height:16px;border:1px solid #aaa;box-sizing:border-box;background:#222"></div><div style="left:161px;top:5px;width:7px;height:7px;border-radius:50%;background:#bbb"></div>
<div style="left:173px;top:0;width:324px;height:18.500px;background:#a6a6a6"></div>
<span style="left:176px;top:5px;font-size:11.600px;color:#151515">形状图层 3</span>
<svg style="left:503px;top:4px" width="12" height="12"><use href="#n"/></svg><svg style="left:518px;top:4px" width="12" height="12"><circle cx="6" cy="6" r="3" fill="#666"/><path d="M6 0v12M0 6h12M2 2l8 8M10 2l-8 8" stroke="#666"/></svg><svg style="left:533px;top:4px" width="11" height="12"><use href="#sl"/></svg>
<div class="sb" style="left:577px"></div><div class="sb" style="left:607px"></div>
<div class="mb"></div><span class="l" style="left:645px;top:4px">正常</span><svg style="left:694px;top:7px" width="9" height="6"><use href="#c"/></svg>
<div class="kb"></div><span class="l" style="left:738px;top:4px">无</span><svg style="left:783px;top:7px" width="9" height="6"><use href="#c"/></svg>
<svg style="left:805px;top:3px" width="13" height="13"><use href="#sp"/></svg>
<div class="ab"></div><span class="l" style="left:830px;top:4px;font-size:12px">2. 设计师深海-毛玻璃</span><svg style="left:947px;top:7px" width="9" height="6"><use href="#c"/></svg>
</div>
<div class="r" style="top:938px;background:#474747">
<svg style="left:8px;top:5px" width="12" height="8"><use href="#e"/></svg><div class="sb" style="left:37px"></div><div class="sb" style="left:52px"></div>
<div style="left:173px;top:0;width:324px;height:18.500px;background:#a6a6a6"></div>
<svg style="left:503px;top:4px" width="12" height="12"><use href="#n"/></svg><svg style="left:533px;top:4px" width="11" height="12"><use href="#sl"/></svg>
<span style="left:547px;top:2px;color:#b5b5b5;font-size:13px;font-style:italic;font-family:'Liberation Serif',serif">fx</span>
<div class="sb" style="left:577px"></div><svg style="left:593px;top:3px" width="12" height="12"><circle cx="6" cy="6" r="5.500" fill="#ccc"/><path d="M6 .5a5.500 5.500 0 0 0 0 11z" fill="#444"/></svg><div class="sb" style="left:607px"></div>
<div class="mb"></div><span class="l" style="left:645px;top:4px">正常</span><svg style="left:694px;top:7px" width="9" height="6"><use href="#c"/></svg>
<div class="tb"></div><div class="kb"></div><span class="l" style="left:738px;top:5px;font-size:11px">Alpha</span><svg style="left:783px;top:7px" width="9" height="6"><use href="#c"/></svg>
<svg style="left:805px;top:3px" width="13" height="13"><use href="#sp"/></svg>
<div class="ab"></div><span class="l" style="left:830px;top:4px;font-size:12px">2. 设计师深海-毛玻璃</span><svg style="left:947px;top:7px" width="9" height="6"><use href="#c"/></svg>
</div>
<div class="r" style="top:998px;background:#383838">
<svg style="left:8px;top:5px" width="12" height="8"><use href="#e"/></svg><div class="sb" style="left:37px"></div><div class="sb" style="left:52px"></div>
<span class="l" style="left:160px;top:5px">形状图层 2</span>
<svg style="left:503px;top:4px" width="12" height="12"><use href="#n"/></svg><svg style="left:518px;top:4px" width="12" height="12"><circle cx="6" cy="6" r="3" fill="#666"/><path d="M6 0v12M0 6h12M2 2l8 8M10 2l-8 8" stroke="#666"/></svg><svg style="left:533px;top:4px" width="11" height="12"><use href="#sl"/></svg>
<div class="sb" style="left:577px;background:#2c2c2c"></div><div class="sb" style="left:592px;background:#2c2c2c"></div><div class="sb" style="left:607px;background:#2c2c2c"></div>
<div class="mb"></div><span class="l" style="left:645px;top:4px">正常</span><svg style="left:694px;top:7px" width="9" height="6"><use href="#c"/></svg>
<div class="tb"></div><div class="kb"></div><span class="l" style="left:738px;top:4px">无</span><svg style="left:783px;top:7px" width="9" height="6"><use href="#c"/></svg>
<svg style="left:805px;top:3px" width="13" height="13"><use href="#sp"/></svg>
<div class="ab"></div><span class="l" style="left:830px;top:4px;font-size:12px">无</span><svg style="left:947px;top:7px" width="9" height="6"><use href="#c"/></svg>
</div>
<div class="r" style="top:1018px;background:#383838">
<svg style="left:8px;top:5px" width="12" height="8"><use href="#e"/></svg><div class="sb" style="left:37px"></div><div class="sb" style="left:52px"></div>
<span class="l" style="left:160px;top:5px">形状图层 1</span>
<svg style="left:503px;top:4px" width="12" height="12"><use href="#n"/></svg><svg style="left:518px;top:4px" width="12" height="12"><circle cx="6" cy="6" r="3" fill="#666"/><path d="M6 0v12M0 6h12M2 2l8 8M10 2l-8 8" stroke="#666"/></svg><svg style="left:533px;top:4px" width="11" height="12"><use href="#sl"/></svg>
<div class="sb" style="left:577px;background:#2c2c2c"></div><div class="sb" style="left:592px;background:#2c2c2c"></div><div class="sb" style="left:607px;background:#2c2c2c"></div>
<div class="mb"></div><span class="l" style="left:645px;top:4px">正常</span><svg style="left:694px;top:7px" width="9" height="6"><use href="#c"/></svg>
<div class="tb"></div><div class="kb"></div><span class="l" style="left:738px;top:4px">无</span><svg style="left:783px;top:7px" width="9" height="6"><use href="#c"/></svg>
<svg style="left:805px;top:3px" width="13" height="13"><use href="#sp"/></svg>
<div class="ab"></div><span class="l" style="left:830px;top:4px;font-size:12px">无</span><svg style="left:947px;top:7px" width="9" height="6"><use href="#c"/></svg>
</div>
<div style="left:3px;top:977px;width:978px;height:1px;background:#1d1d1d"></div>
<span class="b" style="left:502px;top:984px;font-size:11.500px">重置</span>
<!-- bars -->
<div class="bar" style="top:880px;background:#b0503f"></div>
<div class="bar" style="top:900px;background:#6e6857"></div>
<div class="bar" style="top:920px;background:#5a74d4"></div>
<div class="bar" style="top:940px;background:#a5a7c6"></div>
<div class="bar" style="top:1000px;background:#4e5d92"></div>
<div class="bar" style="top:1020px;background:#4e5d92"></div>
<div style="left:981px;top:977px;width:915px;height:1px;background:#1d1d1d"></div>
<div style="left:981px;top:957px;width:915px;height:1px;background:#232323"></div>
<div style="left:988px;top:848px;width:1px;height:214px;background:#2f7fd8"></div>
<svg style="left:982px;top:845px" width="13" height="12"><path d="M0 0h13v6l-6.500 6L0 6z" fill="#2f86e0"/></svg>
<span class="b" style="left:985px;top:961px;font-size:11px;color:#999;font-family:'Liberation Serif',serif">I</span>
<span class="b" style="left:985px;top:981px;font-size:11px;color:#999;font-family:'Liberation Serif',serif">I</span>
<!-- bottom -->
<div style="left:3px;top:1062px;width:1917px;height:1px;background:#151515"></div>
<svg style="left:9px;top:1065px" width="50" height="13"><rect x="1" y="1" width="8" height="8" fill="none" stroke="#3a7fc0"/><rect x="4" y="4" width="8" height="8" fill="none" stroke="#3a7fc0"/><circle cx="23" cy="5" r="4" fill="none" stroke="#3a7fc0"/><circle cx="26" cy="8" r="4" fill="none" stroke="#3a7fc0"/><path d="M41 1h3v11h-3l-3-5.500zM48 1h-2v11h2l3-5.500z" fill="#999"/></svg>
<svg style="left:939px;top:1054px" width="20" height="22"><path d="M10 0l9 5v11l-9 6-9-6V5z" fill="#555"/><path d="M6 7v6a3 3 0 0 0 6 0V7M15 7v9" fill="none" stroke="#222" stroke-width="2"/></svg>
<span class="s" style="left:961px;top:1059px;font-size:12px;color:#555">·cn</span>
<svg style="left:986px;top:1067px" width="12" height="6"><path d="M0 6l6-6 6 6z" fill="#bbb"/></svg>
<div style="left:1007px;top:1067px;width:10px;height:10px;border:2px solid #999;border-radius:50%;box-sizing:border-box"></div>
<div style="left:1017px;top:1072px;width:38px;height:1px;background:#444"></div>
<svg style="left:1067px;top:1066px" width="17" height="10"><path d="M0 10l5-8 3 5 3-7 6 10z" fill="#bbb"/></svg>

<!-- mouse -->
<div style="left:373px;top:880px;width:60px;height:60px;border-radius:50%;background:#ffea00;mix-blend-mode:multiply"></div>
<svg style="left:403px;top:911px" width="13" height="20"><path d="M1 1v15l3.500-3 2.500 6 3-1-2.500-6H12z" fill="#fff" stroke="#000"/></svg>

<!-- overlay -->
<div style="left:55px;top:942px;width:102px;height:100px;background:#b70000"></div>
<svg style="left:55px;top:942px" width="102" height="100"><path d="M14 23l6-8 15 11v44l15-17 17 15V24l12-11 9 13v42L71 86 50 66 31 86 14 75z" fill="#fff"/><path d="M31 30v55M79 17v52" stroke="#b70000" stroke-width="1.500"/></svg>
<span style="left:166px;top:942px;color:#fff;font-size:38px;letter-spacing:9px">王氏教育集团</span>
<span style="left:470px;top:954px;color:#fff;font-size:27px;letter-spacing:2px">以人为本</span>
<div style="left:168px;top:995px;width:416px;height:4.500px;background:#fff"></div>
<span style="left:167px;top:1018px;color:#fff;font-size:27px;letter-spacing:29px">始创于二零零二年</span>
<span style="left:1436px;top:942px;color:#fff;font-size:25px;letter-spacing:19.800px">获得更多免费精品教程</span>
<div style="left:1436px;top:973px;width:429px;height:37px;background:rgba(255,255,255,.62)"></div>
<span style="left:1589px;top:981px;color:#c00000;font-size:25px;font-weight:bold;letter-spacing:21px">绘学霸</span>
<span style="left:1436px;top:1013px;color:#fff;font-size:25px;letter-spacing:5px">在<span style="position:static;font-size:31px;letter-spacing:3.700px">AppStore</span>或<b>应用宝</b>搜索下载</span>
</div></body></html>
